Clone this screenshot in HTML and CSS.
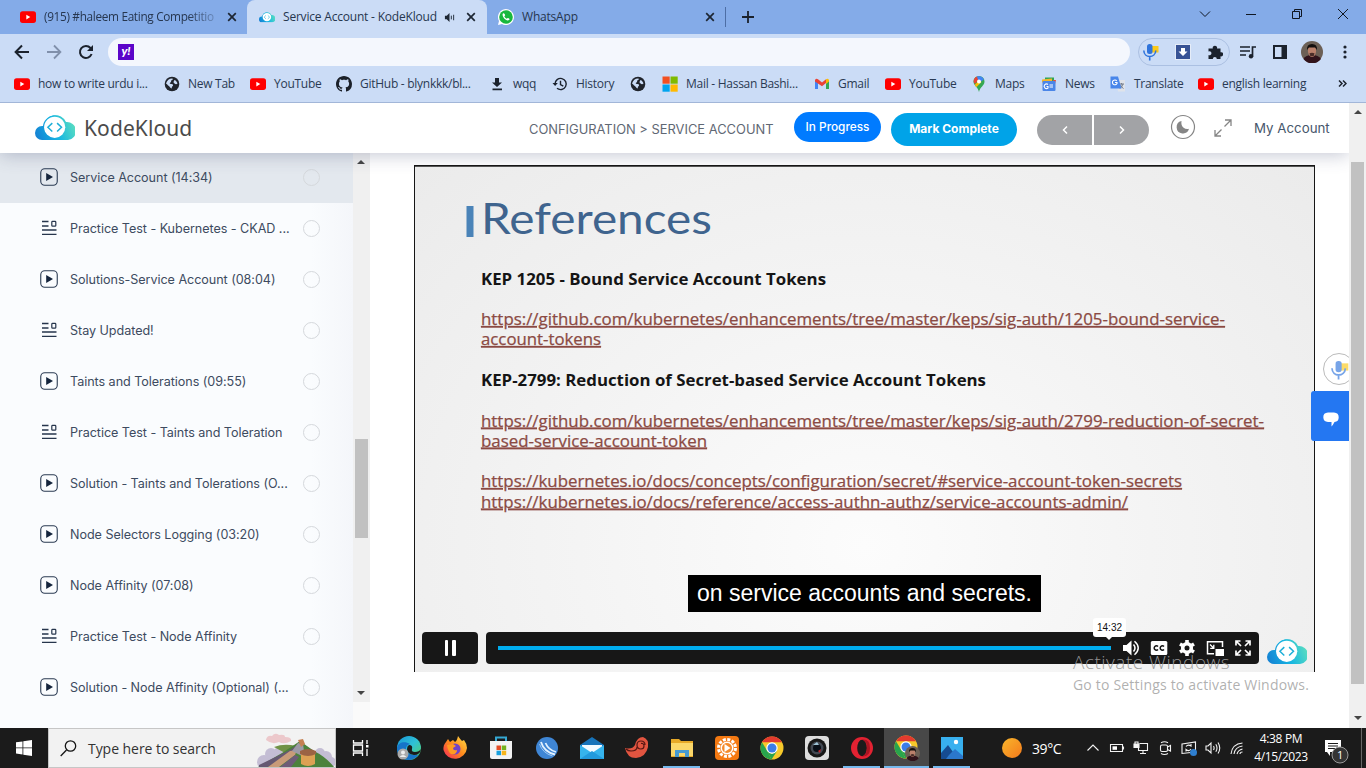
FILE: index.html
```html
<!DOCTYPE html>
<html lang="en">
<head>
<meta charset="utf-8">
<title>Service Account - KodeKloud</title>
<link rel="stylesheet" href="styles.css">
</head>
<body>
<svg class="defs" width="0" height="0">
  <defs>
    <linearGradient id="cloudg" gradientUnits="userSpaceOnUse" x1="0" y1="22" x2="40" y2="6"><stop offset="0" stop-color="#157fd3"/><stop offset=".5" stop-color="#15b5e2"/><stop offset="1" stop-color="#5fe0be"/></linearGradient>
    <linearGradient id="edgeg" x1="0" y1="0" x2="1" y2="1"><stop offset="0" stop-color="#1896d8"/><stop offset=".5" stop-color="#2fc1d6"/><stop offset="1" stop-color="#5bd35c"/></linearGradient>
    <linearGradient id="foxg" x1="1" y1="0" x2="0" y2="1"><stop offset="0" stop-color="#ffe14a"/><stop offset=".5" stop-color="#ff8a1c"/><stop offset="1" stop-color="#f5245c"/></linearGradient>
    <linearGradient id="sung" x1="0" y1="0" x2="1" y2="1"><stop offset="0" stop-color="#f8b62c"/><stop offset="1" stop-color="#f47a1b"/></linearGradient>
    <symbol id="yt" viewBox="0 0 16 16"><rect y="2.3" width="16" height="11.6" rx="2.6" fill="#f00"/><path d="M6.3 5.800v4.600l4-2.300z" fill="#fff"/></symbol>
    <symbol id="x" viewBox="0 0 10 10"><path d="M1.200 1.200l7.600 7.600M8.800 1.200L1.200 8.800" stroke="#1d2633" stroke-width="1.700"/></symbol>
    <symbol id="cloud" viewBox="0 0 40 26"><path d="M7 25a7 7 0 0 1 0-14h2A11.500 11.500 0 0 1 31 7a9 9 0 0 1 2 18z" fill="url(#cloudg)"/><circle cx="19.700" cy="12.300" r="11.800" fill="url(#cloudg)"/><circle cx="19.700" cy="12.300" r="10.600" fill="#fff"/><path d="M17.300 8.100l-4.400 4.200 4.400 4.200M22.100 8.100l4.400 4.200-4.400 4.200" fill="none" stroke="#1eafd8" stroke-width="1.500"/></symbol>
    <symbol id="globe" viewBox="0 0 16 16"><circle cx="8" cy="8" r="7.300" fill="#20242c"/><path d="M2 7.500C3 4 5.500 2.200 8.500 2.400c.8 1-.3 1.800-1.400 2-.2 1.400.5 1.600-1.100 2.300-.9.600.3 1.200 1.500 1.300 1.700.2 1.900 1 1.300 1.900-1.200.5-.8 1.800-1.300 2.700C6 12.300 6 10.500 4.500 9.800 3.600 9 3 8 2 7.500zM10.500 4c1.500.6 2.700 2 3 3.500-1 1-2.200.9-2.900-.1-1.200-.3-1.500-1.600-.1-3.400z" fill="#cbdcf6"/></symbol>
    <symbol id="mic" viewBox="0 0 18 18"><path d="M8.500 3h8v6.500h-8z" fill="#fbc918"/><rect x="5" y="1" width="5.500" height="10" rx="2.500" fill="#2f74dc"/><path d="M1.800 7.500c.2 8 11.600 8 12 0M7.700 13.500v4" fill="none" stroke="#2f74dc" stroke-width="1.600"/></symbol>
    <symbol id="chrome" viewBox="0 0 24 24"><circle cx="12" cy="12" r="11.500" fill="#f7c92b"/><path d="M2 6.300A11.500 11.500 0 0 1 22 6.300H12z" fill="#e23a2e"/><path d="M2 6.300l5.500 9.200 4 8A11.500 11.500 0 0 1 2 6.300z" fill="#28a44d"/><path d="M7 15l5 3 5-3-5.500 8.500z" fill="#28a44d"/><circle cx="12" cy="12" r="5.700" fill="#fff"/><circle cx="12" cy="12" r="4.500" fill="#3b7de8"/></symbol>
    <symbol id="face" viewBox="0 0 22 22"><circle cx="11" cy="11" r="11" fill="#6c6056"/><path d="M2.500 18q2-4 8.500-4t9 4A11 11 0 0 1 2.500 18z" fill="#31131b"/><path d="M7 6h8v5q-1 5-4 5t-4-5z" fill="#ba806b"/><path d="M6 9q-.5-6 5-6t5 6l-2-2.500H8z" fill="#14100f"/><path d="M8.500 12.300l2.500-.6 2.500.6-.8 3h-3.400z" fill="#4a2c28"/></symbol>
    <symbol id="play" viewBox="0 0 18 18"><rect x=".75" y=".75" width="16.500" height="16.500" rx="4" fill="none" stroke="#2a3a52" stroke-width="1.100"/><path d="M6.200 5v8l6.800-4z" fill="#14243c"/></symbol>
    <symbol id="quiz" viewBox="0 0 18 18"><path d="M2 2.500h6.500M2 7h6.500M2 11h14.500M2 15.400h14.500" stroke="#26354c" stroke-width="1.300"/><rect x="11.800" y="2.400" width="4" height="4.800" rx=".8" fill="none" stroke="#26354c" stroke-width="1.200"/></symbol>
  </defs>
</svg>
<div class="screen">
  <div class="tabstrip">
    <div class="tab t1"><svg class="i16"><use href="#yt"/></svg><span class="tabname fade">(915) #haleem Eating Competitio</span><svg class="i10"><use href="#x"/></svg></div>
    <div class="tab t2"><svg class="i16" viewBox="0 0 40 40"><use href="#cloud" y="8" width="40" height="26"/></svg><span class="tabname">Service Account - KodeKloud</span><svg class="i11" viewBox="0 0 12 12"><path d="M1 4h2l3-3v10L3 8H1z" fill="#1d2633"/><path d="M8 4v4M10.500 3v6" stroke="#1d2633"/></svg><svg class="i10"><use href="#x"/></svg></div>
    <div class="tab t3"><svg class="i16" viewBox="0 0 16 16"><path d="M0 16l1-4a8 8 0 1 1 3 3z" fill="#fff"/><circle cx="8" cy="8" r="6.800" fill="#18b83d"/><path d="M5 4.500c-2 2 3 8.500 6 6.500 1.500-1-.6-2.200-1.300-2.100l-.9.900C7.500 9.300 6.800 8.600 6.300 7.300l.8-.9c.1-1-1.100-2.600-2.100-1.900z" fill="#fff"/></svg><span class="tabname">WhatsApp</span><svg class="i10"><use href="#x"/></svg></div>
    <i class="tabline"></i>
    <svg class="plus" width="14" height="14" viewBox="0 0 14 14"><path d="M7 1v12M1 7h12" stroke="#1a212c" stroke-width="1.800"/></svg>
    <div class="wincontrols">
      <svg width="12" height="12" viewBox="0 0 12 12"><path d="M1 3.500l5 5 5-5"/></svg>
      <svg width="12" height="12" viewBox="0 0 12 12"><path d="M1 6.500h10"/></svg>
      <svg width="12" height="12" viewBox="0 0 12 12"><path d="M1.500 3.500h7v7h-7zM3.500 3.500v-2h7v7h-2"/></svg>
      <svg width="12" height="12" viewBox="0 0 12 12"><path d="M1 1l10 10M11 1L1 11"/></svg>
    </div>
  </div>
  <div class="toolbar">
    <svg width="16" height="16" viewBox="0 0 16 16"><path d="M15 8H2M8 1.500L1.600 8 8 14.500" fill="none" stroke="#1b222d" stroke-width="2"/></svg>
    <svg width="16" height="16" viewBox="0 0 16 16"><path d="M1 8h13M8 1.500L14.400 8 8 14.500" fill="none" stroke="#8090ab" stroke-width="1.800"/></svg>
    <svg width="16" height="16" viewBox="0 0 16 16"><path d="M13.600 10A6 6 0 1 1 12.500 4L14 5.500" fill="none" stroke="#1b222d" stroke-width="2"/><path d="M15 1v6H9z" fill="#1b222d"/></svg>
    <div class="omnibox"><span class="yahoo">y!</span></div>
    <div class="extpill">
      <svg width="18" height="18"><use href="#mic"/></svg>
      <svg width="16" height="16" viewBox="0 0 16 16"><path d="M0 0h16v16H0z" fill="#e5ecf8"/><path d="M1 1h14v14H1z" fill="#385395"/><path d="M6 4h4v3.500h2.500L8 12 3.500 7.500H6z" fill="#fff"/></svg>
      <svg width="16" height="16" viewBox="0 0 16 16"><path d="M2 4.500h3.800a2.200 2.200 0 1 1 4.200 0h3.500v3.800a2.100 2.100 0 1 1 0 4V15H9.800a2 2 0 0 0-4 0H1.500v-4a2 2 0 1 0 0-3.500V4.500z" fill="#1b222d"/></svg>
    </div>
    <svg width="16" height="14" viewBox="0 0 16 14"><path d="M0 2h10M0 6h10M0 10h6M12.500 11.500V2H16" fill="none" stroke="#1b222d" stroke-width="1.700"/><circle cx="11" cy="11.200" r="2.200" fill="#1b222d"/></svg>
    <svg width="14" height="14" viewBox="0 0 14 14"><path d="M1 1h12v12H1z" fill="none" stroke="#1b222d" stroke-width="2"/><path d="M8.500 1H13v12H8.500z" fill="#1b222d"/></svg>
    <svg width="22" height="22"><use href="#face"/></svg>
    <svg width="4" height="14" viewBox="0 0 4 14"><g fill="#1b222d"><circle cx="2" cy="2" r="1.600"/><circle cx="2" cy="7" r="1.600"/><circle cx="2" cy="12" r="1.600"/></g></svg>
  </div>
  <div class="bookmarks">
    <div><svg class="i16"><use href="#yt"/></svg><span>how to write urdu i...</span></div>
    <div><svg class="i16"><use href="#globe"/></svg><span>New Tab</span></div>
    <div><svg class="i16"><use href="#yt"/></svg><span>YouTube</span></div>
    <div><svg class="i16" viewBox="0 0 16 16"><path fill="#1b2029" d="M8 0C3.580 0 0 3.580 0 8c0 3.540 2.290 6.530 5.470 7.590.4.070.55-.17.55-.38 0-.19-.01-.82-.01-1.490-2.010.37-2.530-.49-2.690-.94-.09-.23-.48-.94-.82-1.130-.28-.15-.68-.52-.01-.53.63-.01 1.080.58 1.230.82.72 1.210 1.870.87 2.330.66.07-.52.28-.87.51-1.070-1.780-.2-3.640-.89-3.640-3.950 0-.87.31-1.590.82-2.150-.08-.2-.36-1.020.08-2.120 0 0 .67-.21 2.200.82.64-.18 1.320-.27 2-.27s1.360.09 2 .27c1.530-1.040 2.200-.82 2.200-.82.44 1.100.16 1.920.08 2.120.51.56.82 1.270.82 2.150 0 3.070-1.870 3.750-3.650 3.950.29.25.54.73.54 1.480 0 1.070-.01 1.930-.01 2.200 0 .21.15.46.55.38A8.010 8.010 0 0 0 16 8c0-4.420-3.580-8-8-8z"/></svg><span>GitHub - blynkkk/bl...</span></div>
    <div><svg class="i16" viewBox="0 0 16 16"><path d="M6 2h4v4.500h3L8 11 3 6.500h3zM3.500 12.500h9.500v1.700H3.500z" fill="#1b222d"/></svg><span>wqq</span></div>
    <div><svg class="i16" viewBox="0 0 16 16"><path d="M3 8a5.600 5.600 0 1 1 2 4.300M8.500 4.800V8.500l2.800 1.600" fill="none" stroke="#1b222d" stroke-width="1.400"/><path d="M.5 7h5.300L3.100 10z" fill="#1b222d"/></svg><span>History</span></div>
    <div><svg class="i16"><use href="#globe"/></svg></div>
    <div><svg class="i16" viewBox="0 0 16 16"><path fill="#f25022" d="M.5.500h7.200v7.200H.5z"/><path fill="#7fba00" d="M8.500.500h7.200v7.200H8.500z"/><path fill="#00a4ef" d="M.5 8.500h7.200v7.200H.5z"/><path fill="#ffb900" d="M8.500 8.500h7.200v7.200H8.500z"/></svg><span>Mail - Hassan Bashi...</span></div>
    <div><svg class="i16" viewBox="0 0 16 16"><path d="M1 4v9h3V7z" fill="#4285f4"/><path d="M15 4v9h-3V7z" fill="#34a853"/><path d="M1 4q1-2 3-.8L8 6.500l4-3.300V7l-4 3.200L1 5.500z" fill="#ea4335"/><path d="M12 3.200q2-1.200 3 .8v1.500L12 8z" fill="#fbbc04"/></svg><span>Gmail</span></div>
    <div><svg class="i16"><use href="#yt"/></svg><span>YouTube</span></div>
    <div><svg class="i16" viewBox="0 0 16 16"><path d="M8 16C7 11 2.500 9.500 2.500 5.500a5.500 5.500 0 0 1 11 0C13.500 9.500 9 11 8 16z" fill="#34a853"/><path d="M3.500 2.500A5.500 5.500 0 0 1 6 .400L8 3 4 8Q1.500 5.500 3.500 2.500z" fill="#ea4335"/><path d="M6 .4Q10-1 13 3.200L8 7z" fill="#4285f4"/><path d="M4 8.500L8.500 4l2 2-5 5Q4 10 4 8.500z" fill="#fbbc04"/><circle cx="8" cy="5.500" r="2" fill="#fff"/></svg><span>Maps</span></div>
    <div><svg class="i16" viewBox="0 0 16 16"><path d="M4 1.500h9V6H4z" fill="#30a455"/><path d="M1 3.500l10-1v4H1z" fill="#f4b72a"/><path d="M12 4h3l-1 4h-2z" fill="#e34c3c"/><rect x="1.500" y="5" width="13" height="10" rx="1" fill="#4b86e8"/><path d="M7 8.500A2.300 2.300 0 1 0 7 12v-1.500H5.500M8.500 9H12M8.500 11H12" fill="none" stroke="#fff" stroke-width="1.100"/></svg><span>News</span></div>
    <div><svg class="i16" viewBox="0 0 16 16"><path d="M6 4h9v11.500H8z" fill="#dfe3ea"/><path d="M9.500 8H14M11.500 7v1.500M13 8q-1 3-3 4.500M10.500 9q1 2.500 3 3.500" stroke="#777f8c" fill="none"/><path d="M.5.500H8l3.500 12H.5z" fill="#4886ea"/><path d="M6.800 5A2.400 2.400 0 1 0 7 7.500V6.500H5" fill="none" stroke="#fff" stroke-width="1.100"/></svg><span>Translate</span></div>
    <div><svg class="i16"><use href="#yt"/></svg><span>english learning</span></div>
    <div><svg width="9" height="9" viewBox="0 0 9 9"><path d="M1 1.500l3 3-3 3M5 1.500l3 3-3 3" fill="none" stroke="#1b222d" stroke-width="1.500"/></svg></div>
  </div>
  <div class="page">
    <div class="site">
      <header class="top">
        <svg class="logo" width="40" height="26"><use href="#cloud"/></svg>
        <span class="brand">KodeKloud</span>
        <span class="crumb">CONFIGURATION &gt; SERVICE ACCOUNT</span>
        <span class="status">In Progress</span>
        <span class="mark">Mark Complete</span>
        <div class="pager"><span><svg width="8" height="10" viewBox="0 0 8 10"><path d="M6 1.500L2.500 5 6 8.500"/></svg></span><span><svg width="8" height="10" viewBox="0 0 8 10"><path d="M2 1.500L5.500 5 2 8.500"/></svg></span></div>
        <svg class="moon" width="26" height="26" viewBox="0 0 26 26"><circle cx="13" cy="13" r="11.500" fill="none" stroke="#858585" stroke-width="1.200"/><path d="M11.500 7A6.300 6.300 0 1 0 19 14.800Q16 15.600 13.300 13.500 10.800 11 11.500 7z" fill="#858585"/></svg>
        <svg class="expand" width="18" height="18" viewBox="0 0 18 18"><path d="M1 17L7.500 10.500M17 1l-6.500 6.500M11 1h6v6M1 11v6h6" fill="none" stroke="#858585" stroke-width="1.300"/></svg>
        <span class="account">My Account</span>
      </header>
      <div class="body">
        <aside class="side">
          <div class="lessons">
            <div class="row on"><svg><use href="#play"/></svg><span>Service Account (14:34)</span><i></i></div>
            <div class="row"><svg><use href="#quiz"/></svg><span>Practice Test - Kubernetes - CKAD ...</span><i></i></div>
            <div class="row"><svg><use href="#play"/></svg><span>Solutions-Service Account (08:04)</span><i></i></div>
            <div class="row"><svg><use href="#quiz"/></svg><span>Stay Updated!</span><i></i></div>
            <div class="row"><svg><use href="#play"/></svg><span>Taints and Tolerations (09:55)</span><i></i></div>
            <div class="row"><svg><use href="#quiz"/></svg><span>Practice Test - Taints and Toleration</span><i></i></div>
            <div class="row"><svg><use href="#play"/></svg><span>Solution - Taints and Tolerations (O...</span><i></i></div>
            <div class="row"><svg><use href="#play"/></svg><span>Node Selectors Logging (03:20)</span><i></i></div>
            <div class="row"><svg><use href="#play"/></svg><span>Node Affinity (07:08)</span><i></i></div>
            <div class="row"><svg><use href="#quiz"/></svg><span>Practice Test - Node Affinity</span><i></i></div>
            <div class="row"><svg><use href="#play"/></svg><span>Solution - Node Affinity (Optional) (...</span><i></i></div>
          </div>
          <div class="sbar"><b class="up"></b><i></i><b class="down"></b></div>
        </aside>
        <main class="content">
          <div class="video">
            <svg class="slide" width="899" height="506" viewBox="415 166 899 506">
              <rect x="466.500" y="206" width="7" height="31" fill="#4a83b8"/>
              <text class="title" x="481" y="234" textLength="231" lengthAdjust="spacingAndGlyphs">References</text>
              <text class="bold" x="481" y="285" textLength="345" lengthAdjust="spacingAndGlyphs">KEP 1205 - Bound Service Account Tokens</text>
              <text class="link" x="481" y="325" textLength="744" lengthAdjust="spacingAndGlyphs">https://github.com/kubernetes/enhancements/tree/master/keps/sig-auth/1205-bound-service-</text>
              <text class="link" x="481" y="345" textLength="120" lengthAdjust="spacingAndGlyphs">account-tokens</text>
              <text class="bold" x="481" y="386" textLength="505" lengthAdjust="spacingAndGlyphs">KEP-2799: Reduction of Secret-based Service Account Tokens</text>
              <text class="link" x="481" y="426.500" textLength="783" lengthAdjust="spacingAndGlyphs">https://github.com/kubernetes/enhancements/tree/master/keps/sig-auth/2799-reduction-of-secret-</text>
              <text class="link" x="481" y="446.500" textLength="226" lengthAdjust="spacingAndGlyphs">based-service-account-token</text>
              <text class="link" x="481" y="487" textLength="701" lengthAdjust="spacingAndGlyphs">https://kubernetes.io/docs/concepts/configuration/secret/#service-account-token-secrets</text>
              <text class="link" x="481" y="507.500" textLength="647" lengthAdjust="spacingAndGlyphs">https://kubernetes.io/docs/reference/access-authn-authz/service-accounts-admin/</text>
            </svg>
            <div class="overlay">
              <div class="caption">on service accounts and secrets.</div>
              <div class="controls">
                <div class="pause"><i></i><i></i></div>
                <div class="playbar">
                  <div class="progress"><span class="tip">14:32</span></div>
                  <svg viewBox="0 0 18 18"><path d="M1 6h3.500L9.500 1.500v15L4.500 12H1z" fill="#fff"/><path d="M11.500 5.500q3 3.500 0 7M12.500 2.300q7.500 6.700 0 13.400" fill="none" stroke="#fff" stroke-width="1.500"/></svg>
                  <svg viewBox="0 0 18 18"><rect x=".8" y="2" width="16.500" height="14" rx="1.500" fill="#fff"/><path d="M8 7.500A2.200 2.200 0 1 0 8 10.500M14 7.500A2.200 2.200 0 1 0 14 10.500" fill="none" stroke="#171717" stroke-width="1.500"/></svg>
                  <svg viewBox="0 0 18 18"><circle cx="9" cy="9" r="4.300" fill="none" stroke="#fff" stroke-width="3.600"/><path d="M9 1v3M9 14v3M2 5l2.600 1.500M13.400 11.500L16 13M2 13l2.600-1.500M13.400 6.500L16 5" stroke="#fff" stroke-width="3.600"/></svg>
                  <svg viewBox="0 0 18 18"><path d="M8 14.800H1.500V2.700h15V8" fill="none" stroke="#fff" stroke-width="1.500"/><path d="M9.500 10H18v7H9.500z" fill="#fff"/><path d="M4 5.500L7.500 9M7.800 5.700v3.600H4.200" fill="none" stroke="#fff" stroke-width="1.300"/></svg>
                  <svg viewBox="0 0 18 18"><path d="M2 6.500V2h4.500M2 2l5 5M11.500 2H16v4.500M16 2l-5 5M2 11.500V16h4.500M2 16l5-5M16 11.500V16h-4.500M16 16l-5-5" fill="none" stroke="#fff" stroke-width="1.700"/></svg>
                </div>
                <svg class="vlogo" width="40" height="26"><use href="#cloud"/></svg>
              </div>
            </div>
          </div>
        </main>
      </div>
      <div class="micfab"><svg width="20" height="22" viewBox="0 0 18 18"><use href="#mic"/></svg></div>
      <div class="chat"><svg width="16" height="15" viewBox="0 0 16 15"><path d="M5 .5h6q4.700.3 4.700 4.700T11.500 10q-1.500 3-3 4.500V10H5Q.4 9.600.3 5.200T5 .5z" fill="#fff"/></svg></div>
      <div class="watermark"><div class="wm1">Activate Windows</div><div class="wm2">Go to Settings to activate Windows.</div></div>
    </div>
    <div class="pbar"><b class="up"></b><i></i><b class="down"></b></div>
  </div>
  <footer class="taskbar">
    <div><svg width="16" height="16" viewBox="0 0 16 16"><path d="M0 2.300l6.500-.9v6.100H0zM7.300 1.300L16 0v7.500H7.300zM0 8.300h6.500v6.200L0 13.600zM7.300 8.300H16V16l-8.700-1.300z" fill="#fff"/></svg></div>
    <div class="search">
      <svg width="17" height="17" viewBox="0 0 17 17"><circle cx="10.500" cy="6" r="5.200" fill="none" stroke="#151515" stroke-width="1.300"/><path d="M6.500 10L.7 16" stroke="#151515" stroke-width="1.300"/></svg>
      <span>Type here to search</span>
      <svg class="wall" width="79" height="35" viewBox="0 0 79 35"><path d="M10 8q1-5 6-4 3-4 7-1 6-1 6 2 7 0 6 4-7 4-12 1-7 3-13-2z" fill="#ecc8cb"/><g fill="#c4bdd4"><circle cx="8" cy="30" r="7"/><circle cx="15" cy="22" r="6"/><circle cx="23" cy="20" r="5"/><circle cx="64" cy="21" r="5"/><circle cx="70" cy="25" r="6"/><circle cx="75" cy="30" r="5"/></g><path d="M18 15q10-4 22-1l-9 8z" fill="#719246"/><path d="M2 35L26 21l18-12 14 10q12 6 20 16z" fill="#4c823b"/><path d="M3 33L34 18l7-5 1 6L12 35H3z" fill="#665872"/><path d="M12 35l22-16 7-1-2 5-16 12z" fill="#c99b79"/><path d="M24 35l15-12 4 2-8 10z" fill="#6e5c78"/><path d="M36 19l6-8 5 1 1 7 4 3-6 2z" fill="#9d9aa6"/><path d="M42 8l5-1 2 5-4 3z" fill="#c58052"/><path d="M45 21q7-4 14 0v11q-7 4-14 0z" fill="#dda154"/><path d="M44 19q8-4 16 0v3q-8 4-16 0z" fill="#9b6344"/></svg>
    </div>
    <div><svg width="18" height="16" viewBox="0 0 18 16"><path d="M1.500 0v3h9V0M1.500 16v-3h9v3M1.500 5h9v6h-9zM15 0v4M15 9v7" fill="none" stroke="#fff" stroke-width="1.300"/><path d="M14 5h2.500v2.500H14z" fill="#fff"/></svg></div>
    <div><svg class="i24" viewBox="0 0 24 24"><circle cx="12" cy="12" r="12" fill="url(#edgeg)"/><path d="M0 12C1 6 8 5 13 8q-4 1-4 5 1 6 10 6 2 0 3-1-4 6-11 6Q0 23 0 12z" fill="#1674c9"/><path d="M12 9q4 0 3 4-1 3 3 3 4 0 6-3-1 6-7 6-7-1-7-6 0-3 2-4z" fill="#1b1b1b"/><circle cx="6" cy="18" r="5.500" fill="#aaa"/><circle cx="6" cy="16.500" r="2" fill="#eee"/><path d="M2.500 21q3.500-4 7 0z" fill="#eee"/></svg></div>
    <div><svg class="i24" viewBox="0 0 24 24"><path d="M3 6l2-3 2 3 3-2 2 2q2-1 3-6 2 3 4 5l2-1q3 4 3 8A12 12 0 0 1 .5 14Q0 9 3 6z" fill="url(#foxg)"/><circle cx="12" cy="13" r="5.500" fill="#7142c9"/><path d="M4 9l6-1 3 2-3 2q0 3 4 2 0 5-6 4-3-2-4-9z" fill="#ff9b22"/></svg></div>
    <div><svg class="i24" viewBox="0 0 24 24"><path d="M7 6V1.500h10V6" fill="none" stroke="#35a8d3" stroke-width="2"/><path d="M1 5h22v16q0 2-2 2H3q-2 0-2-2z" fill="#f3f3f3"/><path fill="#e44d26" d="M7.500 9.500H12V14H7.500z"/><path fill="#74b21e" d="M12.700 9.500h4.500V14h-4.500z"/><path fill="#18a0dd" d="M7.500 14.700H12v4.500H7.500z"/><path fill="#f7b51a" d="M12.700 14.700h4.500v4.500h-4.500z"/></svg></div>
    <div><svg class="i22" viewBox="0 0 22 22"><circle cx="11" cy="11" r="11" fill="#3f86d5"/><path d="M5 5q3 10 14 12.500M9.500 6q3 7 10.500 9" fill="none" stroke="#e2f1ff" stroke-width="1.800"/><path d="M3.500 7q3 9 13 12" fill="none" stroke="#9cc8f3"/></svg></div>
    <div><svg class="i24" viewBox="0 0 24 24"><path d="M0 9l12-8 12 8v14H0z" fill="#1773b9"/><path d="M2 9h20v10H2z" fill="#f2faff"/><path d="M0 9l12 8 12-8v14H0z" fill="#36b4ed"/><path d="M0 23l12-8 12 8z" fill="#229add"/></svg></div>
    <div><svg class="i24" viewBox="0 0 24 24"><path d="M0 12q7 2 10-3 2-8 8-8 6 2 5 10-2 10-12 11Q2 22 0 12z" fill="#e25540"/><path d="M20 9q0-4-4-4t-4 4q0 4 4 4 3 0 3-3t-3-2.500M12 11q0 4-6 4-3 0-5-2" fill="none" stroke="#571713" stroke-width="1.200"/></svg></div>
    <div class="run"><svg class="i22" viewBox="0 0 22 22"><path d="M0 2h8l2 2h12v16H0z" fill="#e7a928"/><path d="M0 6h22v13H0z" fill="#fbd76a"/><path d="M4 20v-7h14v7h-4v-4H8v4z" fill="#479bd1"/></svg></div>
    <div><svg class="i24" viewBox="0 0 24 24"><rect width="24" height="24" rx="4" fill="#f47912"/><circle cx="12" cy="12" r="8.500" fill="none" stroke="#fff" stroke-width="3" stroke-dasharray="3 1.450"/><circle cx="12" cy="12" r="6.500" fill="#fff"/><circle cx="12" cy="12" r="5" fill="#f58b2c"/><path d="M9.500 8v8l6-4z" fill="#fff"/></svg></div>
    <div><svg class="i24"><use href="#chrome"/></svg></div>
    <div><svg class="i24" viewBox="0 0 24 24"><rect width="24" height="24" rx="4" fill="#dedede"/><circle cx="12" cy="12" r="9.500" fill="#171717"/><circle cx="12" cy="12" r="6.500" fill="#424852"/><circle cx="12" cy="12" r="4" fill="#080f18"/><path d="M8 9l4-3 2 3z" fill="#9ec3d6"/><path d="M13 15l3-2-1 4z" fill="#c1272d"/></svg></div>
    <div class="run"><svg class="i22" viewBox="0 0 22 22"><ellipse cx="11" cy="11" rx="11" ry="11" fill="#e32232"/><ellipse cx="11" cy="11" rx="4.800" ry="8.300" fill="#1b1b1b"/><path d="M11 2.700q8-1 8 8.300t-8 8.300q5-1 5-8.300t-5-8.300z" fill="#ab1421"/></svg></div>
    <div class="run active"><svg class="i26" viewBox="0 0 26 26"><use href="#chrome" width="24" height="24"/><use href="#face" x="11" y="11" width="15" height="15"/></svg></div>
    <div class="run"><svg class="i22" viewBox="0 0 22 22"><path d="M0 0h22v22H0z" fill="#38b0ef"/><path d="M0 16l7-8 10 14H0z" fill="#164c91"/><path d="M8 18l6-6 8 7v3H5z" fill="#2b77cb"/><circle cx="15" cy="5" r="2.200" fill="#fff"/></svg></div>
    <div class="weather"><svg width="20" height="20" viewBox="0 0 20 20"><circle cx="10" cy="10" r="10" fill="url(#sung)"/></svg><span>39°C</span></div>
    <div class="tray">
      <svg viewBox="0 0 16 16"><path d="M2.500 10.500L8 5l5.500 5.500"/></svg>
      <svg viewBox="0 0 16 16"><path d="M1.500 4.500h12v7h-12zM14.500 6.500v3"/><path d="M3.500 6.300H8v3.500H3.500z" fill="#fff" stroke="none"/></svg>
      <svg viewBox="0 0 16 16"><path d="M6.500 3.500h8v7h-9V8M10 10.500v3M7 13.500h6"/><path d="M1 4h5v3.500H1z" fill="#f3f3f3"/><path d="M2 4V2h3v2"/></svg>
      <svg viewBox="0 0 16 16"><rect x="3.500" y="5" width="7" height="6.500" rx="1.500"/><path d="M10.500 7l3-1.500v5.500l-3-1.500M4 2.800q3.500-2 7 0M4 13.500q3.500 2 7 0"/></svg>
      <svg viewBox="0 0 16 16"><path d="M1 4l13.500-2v10L1 13.500zM5 6.500q2-2.500 5-.5V4M10 9q-2 3-5 .5v2"/><circle cx="12.500" cy="12.500" r="3.500" fill="#2f7fd0" stroke="none"/></svg>
      <svg viewBox="0 0 16 16"><path d="M1 6h2l3-3v10L3 10H1zM8.500 6q1.200 2 0 4M10.800 4.300q2.400 3.700 0 7.400M13 2.500q3.500 5.500 0 11"/></svg>
      <svg viewBox="0 0 16 16"><path d="M2 14Q3 4 13.500 3M5 14q1-7 8.500-8M8 14q1-4 5.500-5M11 14q0-2 2.500-2"/></svg>
    </div>
    <div class="clock"><span>4:38 PM</span><span>4/15/2023</span></div>
    <div class="notif"><svg width="26" height="26" viewBox="0 0 26 26"><path d="M2 2h16v12H7v4l-3-4H2z" fill="#fff"/><path d="M5 5.500h10M5 8h10M5 10.500h7" stroke="#1b1b1b"/><circle cx="17" cy="17" r="8" fill="#343434" stroke="#999"/><text x="14" y="21">1</text></svg></div>
  </footer>
</div>
</body>
</html>
```
FILE: styles.css
```css
* { box-sizing: border-box; }
body { margin: 0; overflow: hidden; font-family: "Open Sans", "Noto Sans", sans-serif; }
.defs { position: absolute; }
svg { display: block; flex: none; }
span { white-space: nowrap; }
.screen { width: 1366px; height: 768px; display: flex; flex-direction: column; background: #fff; }
.i10 { width: 10px; height: 10px; }
.i11 { width: 11px; height: 11px; }
.i16 { width: 16px; height: 16px; }
.i22 { width: 22px; height: 22px; }
.i24 { width: 24px; height: 24px; }
.i26 { width: 26px; height: 26px; }

/* browser chrome */
.tabstrip { height: 34px; background: #84abe8; display: flex; align-items: center; }
.tab { height: 34px; display: flex; align-items: center; font-size: 12px; color: #26364f; }
.tabname { letter-spacing: -.2px; flex: none; line-height: 17px; }
.t1 { width: 247px; padding-left: 20px; }
.t1 .tabname { width: 175px; margin: 0 8px 1px 8px; font-size: 11.800px; letter-spacing: -.32px; }
.fade { -webkit-mask-image: linear-gradient(90deg, #000 82%, rgba(0,0,0,.15)); mask-image: linear-gradient(90deg, #000 82%, rgba(0,0,0,.15)); }
.t2 { width: 240px; padding-left: 12px; background: #cbdcf6; border-radius: 8px 8px 0 0; }
.t2 .tabname { width: 154px; margin: 0 7px 1px 8px; }
.t2 .i11 { margin-right: 11px; }
.t3 { width: 238px; padding-left: 11px; }
.t3 .tabname { width: 174px; margin: 0 9px 1px 8px; }
.tabline { width: 1px; height: 20px; background: #4d6ea5; }
.plus { margin-left: 15px; }
.wincontrols { display: flex; gap: 34px; margin: -6px 17px 0 auto; }
.wincontrols path { fill: none; stroke: #101722; }
.toolbar { height: 36px; background: #cbdcf6; display: flex; align-items: center; padding: 0 20px 0 14px; }
.toolbar > svg:nth-child(2), .toolbar > svg:nth-child(3) { margin-left: 16px; }
.omnibox { width: 1022px; flex: none; height: 28px; margin-left: 14px; border-radius: 14px; background: #f4f7fd; display: flex; align-items: center; padding-left: 10px; }
.yahoo { width: 16px; height: 16px; background: #5b05c9; color: #fff; font: italic 900 12px/13px "Lato", sans-serif; text-align: center; }
.extpill { width: 92px; flex: none; height: 28px; margin: 0 10px 0 8px; border: 1px solid #abc0e2; border-radius: 14px; display: flex; align-items: center; gap: 16px; padding-left: 3px; }
.extpill svg:first-child { margin-right: -1px; }
.toolbar > svg:nth-child(7) { margin-left: 17px; }
.toolbar > svg:nth-child(8) { margin-left: 14px; }
.toolbar > svg:nth-child(9) { margin-left: 20px; }
.bookmarks { height: 33px; background: #cbdcf6; border-bottom: 1px solid #a2b6d8; padding: 0 0 5px 14px; display: grid; grid-template-columns: 150px 86px 86px 153px 63px 78px 32px 152px 71px 86px 70px 69px 88px 140px 14px; align-items: center; font-size: 12px; letter-spacing: -.27px; color: #2a3a53; }
.bookmarks > div { display: flex; align-items: center; gap: 8px; }

/* site header */
.page { height: 625px; display: flex; }
.site { width: 1349px; height: 625px; position: relative; overflow: hidden; font-family: "Inter", sans-serif; }
.top { height: 50px; display: flex; align-items: center; background: #fff; box-shadow: 0 2px 18px rgba(60,70,110,.3); position: relative; }
.logo { margin-left: 35px; flex: none; }
.brand { width: 445px; flex: none; margin-left: 9px; font: 21px/30px "Noto Sans", sans-serif; color: #4b4b4b; letter-spacing: .1px; }
.crumb { width: 265px; flex: none; margin: 2px 0 0; font-size: 12.900px; color: #5f6874; }
.status { width: 87px; flex: none; height: 30px; margin-bottom: 2px; border-radius: 15px; background: #007bff; color: #fff; font-size: 11.800px; font-weight: 500; line-height: 30px; text-align: center; }
.mark { width: 126px; flex: none; height: 33px; margin: 3px 20px 0 10px; border-radius: 17px; background: #00a3e8; color: #fff; font-size: 12px; font-weight: 700; line-height: 32px; text-align: center; }
.pager { display: flex; flex: none; gap: 2px; margin-top: 4px; width: 112px; }
.pager span { flex: 1; height: 30px; background: #a2a3a6; display: flex; align-items: center; justify-content: center; border-radius: 15px 0 0 15px; }
.pager span + span { border-radius: 0 15px 15px 0; }
.pager path { fill: none; stroke: #fff; stroke-width: 1.500; }
.moon { margin: -2px 0 0 21px; }
.expand { margin-left: 18px; }
.account { margin-left: 22px; font-size: 13.300px; color: #47576c; }

/* lessons */
.body { display: flex; height: 575px; }
.side { width: 370px; flex: none; display: flex; background: #fafafa; }
.lessons { width: 353px; height: 575px; background: linear-gradient(90deg, #fafcfe 88%, #f4f6fa); overflow: hidden; }
.row { height: 51px; display: flex; align-items: center; padding: 0 0 1px 40px; font-size: 12.600px; color: #3d4b60; }
.row:first-child { height: 50px; padding-bottom: 2px; }
.row.on { background: #e3e8ee; }
.row svg { width: 18px; height: 18px; margin-right: 12px; }
.row span { width: 233px; flex: none; letter-spacing: -.05px; }
.row i { width: 17px; height: 17px; border: 1.500px solid #d5d8dc; border-radius: 50%; }
.sbar { width: 17px; height: 549px; background: #f0f0f0; display: flex; flex-direction: column; align-items: center; padding-right: 1px; }
.up, .down { border: 4px solid transparent; width: 0; height: 0; }
.up { border-bottom-color: #454545; border-top: 0; }
.down { border-top-color: #454545; border-bottom: 0; }
.sbar .up { margin-top: 7px; }
.sbar i { width: 13px; height: 99px; background: #c1c1c1; margin-top: 275px; }
.sbar .down { margin-top: 153px; }
.content { flex: 1; padding: 12px 0 0 44px; }

/* player */
.video { width: 901px; height: 507px; position: relative; border: 1px solid #161616; border-bottom: 0; box-shadow: inset 0 1px 0 #555; background: radial-gradient(ellipse at 50% 75%, #fcfcfc 0, #f4f4f4 45%, #ebebeb 100%); }
.slide { font-family: "Open Sans", "Noto Sans", sans-serif; }
.title { font: 42px "Lato", sans-serif; fill: #3f648e; }
.bold { font-size: 16.500px; font-weight: 700; fill: #151515; }
.link { font-size: 16.500px; fill: #8b4a43; stroke: #8b4a43; stroke-width: .25; text-decoration: underline; }
.overlay { position: absolute; inset: 0; display: flex; flex-direction: column; justify-content: flex-end; align-items: center; }
.caption { width: 353px; height: 37px; background: #000; color: #fff; font: 23px/37px "Liberation Sans", sans-serif; text-align: center; margin-bottom: 20px; }
.controls { width: 899px; height: 32px; margin-bottom: 8px; padding-left: 7px; display: flex; }
.pause, .playbar { background: #171717; border-radius: 4px; height: 32px; display: flex; align-items: center; }
.pause { width: 56px; justify-content: center; gap: 4px; }
.pause i { width: 3.500px; height: 16px; background: #fff; border-radius: 1px; }
.playbar { width: 773px; margin-left: 8px; padding-left: 12px; gap: 10px; }
.playbar svg { width: 18px; height: 18px; }
.progress { width: 613px; flex: none; height: 4px; background: #00adef; position: relative; margin-right: 1px; }
.tip { position: absolute; right: -15px; top: -28px; width: 33px; height: 19px; border-radius: 3px; background: #fff; color: #111; font: 10px/19px "Liberation Sans", sans-serif; text-align: center; }
.tip::after { content: ""; position: absolute; left: 13px; top: 19px; border: 3px solid transparent; border-top-color: #fff; border-bottom: 0; }
.vlogo { margin: 7px 0 0 8px; }

/* floating items */
.micfab { position: absolute; left: 1323px; top: 250px; width: 32px; height: 32px; border: 1px solid #bbb; border-radius: 50%; background: #fff; padding: 5px 6px; }
.micfab svg { opacity: .65; }
.chat { position: absolute; right: 0; top: 288px; width: 38px; height: 50px; border-radius: 3px 0 0 3px; background: #2477f2; display: flex; align-items: center; justify-content: center; padding: 6px 0 0 2px; }
.watermark { position: absolute; left: 1073px; top: 547px; font-family: "Open Sans", sans-serif; color: rgba(150,150,150,.75); white-space: nowrap; }
.wm1 { font-size: 19px; line-height: 24px; font-weight: 300; letter-spacing: .5px; color: rgba(155,155,155,.95); }
.wm2 { font-size: 14px; line-height: 22px; letter-spacing: .19px; }
.pbar { width: 17px; background: #f0f0f0; display: flex; flex-direction: column; align-items: center; }
.pbar .up { margin-top: 7px; }
.pbar i { width: 13px; height: 522px; margin-top: 48px; background: #c1c1c1; }
.pbar .down { margin-top: 32px; }

/* taskbar */
.taskbar { height: 40px; background: #1b1b1b; display: grid; grid-template-columns: 48px 288px 50px 46px 46px 46px 45px 45px 45px 45px 45px 45px 45px 45px 45px 45px 107px 168px 64px 53px; color: #fff; }
.taskbar > div { display: flex; align-items: center; justify-content: center; }
.taskbar .search { background: #f2f2f2; border: 1px solid #c6c6c6; justify-content: flex-start; padding-left: 11px; color: #333; font-size: 14px; letter-spacing: -.05px; }
.search span { margin-left: 11px; width: 168px; }
.wall { margin-top: 3px; }
.taskbar .run { border-bottom: 2px solid #76b9ed; padding-top: 2px; margin: 0 4px; }
.taskbar .active { background: #484848; margin: 0; }
.taskbar .weather { justify-content: flex-start; padding-left: 28px; gap: 10px; font-size: 14px; letter-spacing: -.4px; }
.taskbar .tray { gap: 8px; }
.tray svg { width: 16px; height: 16px; fill: none; stroke: #f3f3f3; stroke-width: 1.100; }
.taskbar .clock { flex-direction: column; font-size: 12px; line-height: 18px; letter-spacing: -.35px; padding-top: 2px; justify-content: flex-start; }
.taskbar .notif { border-right: 1px solid #666; margin-right: 4px; justify-content: flex-start; padding: 6px 0 0 10px; }
.notif text { font: 11px "Open Sans", sans-serif; fill: #fff; }
```
